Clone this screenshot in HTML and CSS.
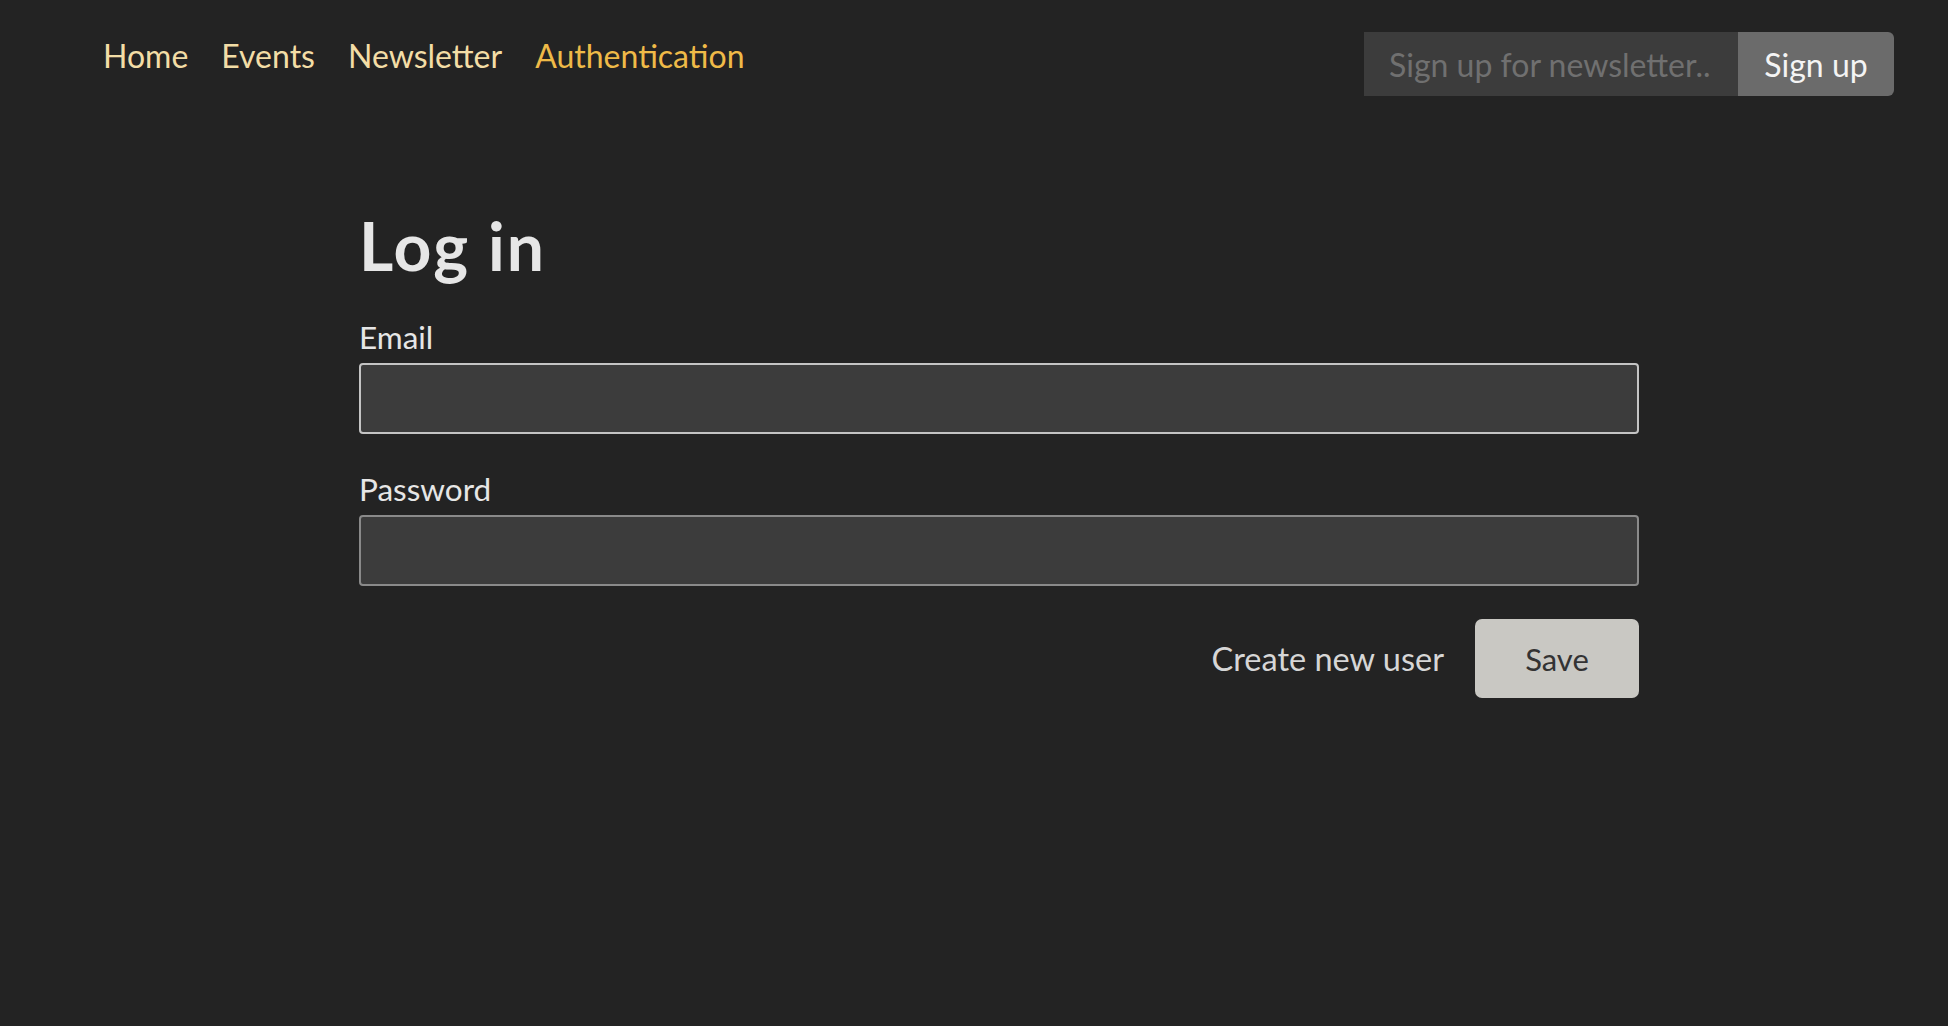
FILE: index.html
```html
<!DOCTYPE html>
<html lang="en">
<head>
<meta charset="utf-8">
<title>Log in</title>
<link rel="stylesheet" href="styles.css">
</head>
<body>
<header class="topbar">
  <nav class="mainnav">
    <a href="#" class="navlink">Home</a>
    <a href="#" class="navlink">Events</a>
    <a href="#" class="navlink">Newsletter</a>
    <a href="#" class="navlink active">Authentication</a>
  </nav>
  <form class="signup">
    <input class="signup-input" type="email" placeholder="Sign up for newsletter..">
    <button class="signup-btn" type="button">Sign up</button>
  </form>
</header>
<main class="content">
  <h1 class="title">Log in</h1>
  <form class="login">
    <label class="field">
      <span class="label">Email</span>
      <input class="input input-email" type="email">
    </label>
    <label class="field">
      <span class="label">Password</span>
      <input class="input" type="password">
    </label>
    <div class="actions">
      <a href="#" class="create">Create new user</a>
      <button class="save" type="button">Save</button>
    </div>
  </form>
</main>
</body>
</html>
```
FILE: styles.css
```css
* { box-sizing: border-box; }
html, body { margin: 0; padding: 0; }
body {
  background: #232323;
  color: #e6e6e6;
  font-family: Lato, "Noto Sans", sans-serif;
  min-height: 1026px;
}
.topbar {
  display: flex;
  justify-content: space-between;
  align-items: flex-start;
  padding: 0 54px 0 103px;
}
.mainnav {
  display: flex;
  gap: 33px;
  margin-top: 36px;
}
.navlink {
  font-size: 32px;
  line-height: 40px;
  color: #f3dda6;
  text-decoration: none;
}
.navlink.active { color: #efba48; }
.signup {
  display: flex;
  margin: 32px 0 0 0;
  height: 64px;
}
.signup-input {
  width: 374px;
  height: 64px;
  background: #3c3c3c;
  border: none;
  outline: none;
  padding: 0 0 0 25px;
  font-family: inherit;
  font-size: 32px;
  color: #ddd;
}
.signup-input::placeholder { color: #707070; }
.signup-btn {
  width: 156px;
  height: 64px;
  background: #6b6b6b;
  color: #f4f4f4;
  border: none;
  border-radius: 0 6px 6px 0;
  font-family: inherit;
  font-size: 32px;
  padding: 0;
}
.content {
  width: 1280px;
  margin: 111px 0 0 359px;
}
.title {
  margin: 0;
  font-size: 66px;
  line-height: 78px;
  letter-spacing: 2px;
  font-weight: 700;
  color: #e6e6e6;
}
.login { margin-top: 32px; }
.field {
  display: flex;
  flex-direction: column;
  gap: 6px;
  margin-bottom: 35px;
}
.label {
  font-size: 31.5px;
  line-height: 40px;
  color: #e6e6e6;
}
.input {
  height: 71px;
  width: 100%;
  background: #3c3c3c;
  border: 2px solid #8a8a8a;
  border-radius: 4px;
  outline: none;
  font-family: inherit;
  font-size: 30px;
  color: #eee;
  padding: 0 16px;
}
.input-email { border-color: #c4c4c4; }
.actions {
  display: flex;
  justify-content: flex-end;
  align-items: center;
  gap: 31px;
  margin-top: -2px;
}
.create {
  font-size: 32.5px;
  color: #d6d6d6;
  text-decoration: none;
}
.save {
  width: 164px;
  height: 79px;
  background: #c9c8c3;
  color: #333;
  border: none;
  border-radius: 7px;
  font-family: inherit;
  font-size: 31px;
  padding: 0;
}
```
